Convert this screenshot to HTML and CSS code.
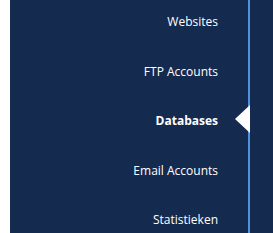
FILE: index.html
```html
<!DOCTYPE html>
<html lang="en">

<head>
    <meta charset="UTF-8">
    <meta name="viewport" content="width=device-width, initial-scale=1.0">
    <title>Menu</title>
    <link rel="stylesheet" href="styles.css">
</head>

<body>

    <div class="sidebar">
        <ul class="menu">
            <li><a href="#">Websites</a></li>
            <li><a href="#">FTP Accounts</a></li>
            <li class="active"><a href="#">Databases</a></li>
            <li><a href="#">Email Accounts</a></li>
            <li><a href="#">Statistieken</a></li>
        </ul>
        <div class="edge"></div>
    </div>

</body>

</html>
```

FILE: styles.css
```css
body {
    margin: 0;
    padding: 0 0 0 10px;
    background-color: #fff;
    font-family: "Open Sans", "Noto Sans", sans-serif;
    overflow: hidden;
}

.sidebar {
    display: flex;
    height: 100vh;
    overflow: hidden;
    background-color: #142a4f;
}

.menu {
    list-style: none;
    margin: -3px 0 0 0;
    padding: 0;
    width: 238px;
    flex: none;
    border-right: 2px solid #4f93db;
}

.menu li {
    position: relative;
    height: 49.5px;
    display: flex;
    align-items: center;
    justify-content: flex-end;
    padding-right: 30px;
}

.menu a {
    color: #fff;
    text-decoration: none;
    font-size: 12px;
}

.menu li.active a {
    font-weight: bold;
}

/* pointer on the active item */
.menu li.active::after {
    content: "";
    position: absolute;
    right: -2px;
    top: 50%;
    margin-top: -16px;
    border-top: 14px solid transparent;
    border-bottom: 14px solid transparent;
    border-right: 15px solid #fff;
}

.edge {
    flex: 1;
}
```
